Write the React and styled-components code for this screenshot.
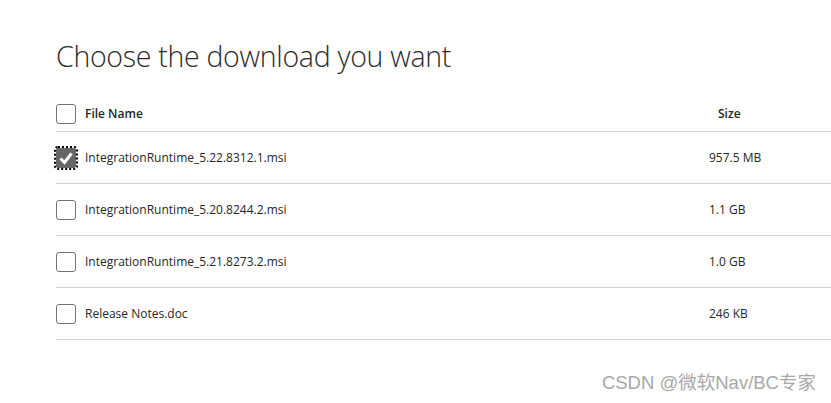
import React, { useState } from "react";
import styled, { createGlobalStyle, css } from "styled-components";

const Global = createGlobalStyle`
  html, body {
    margin: 0;
    padding: 0;
    background: #fff;
    overflow: hidden;
  }
  body {
    font-family: "Open Sans", "Noto Sans", sans-serif;
    color: #262626;
  }
`;

const Page = styled.div`
  width: 831px;
  height: 403px;
  padding: 36px 0 0 56px;
  box-sizing: border-box;
  position: relative;
`;

const Title = styled.h1`
  margin: 0 0 28px;
  font-family: "Open Sans", sans-serif;
  font-weight: 300;
  font-size: 28.5px;
  line-height: 40px;
  color: #2b2b2b;
  letter-spacing: -0.3px;
`;

const Table = styled.div`
  display: flex;
  flex-direction: column;
`;

const Row = styled.div`
  display: grid;
  grid-template-columns: 29px 624px 1fr;
  align-items: center;
  height: 51px;
  border-bottom: 1px solid #d2d2d2;
  font-size: 12px;
  ${(p) =>
    p.header &&
    css`
      height: 27px;
      align-items: start;
      font-weight: 600;
    `}
`;

const Box = styled.div`
  width: 20px;
  height: 20px;
  box-sizing: border-box;
  border: 1px solid #737373;
  border-radius: 3px;
  display: flex;
  align-items: center;
  justify-content: center;
  cursor: pointer;
  ${(p) =>
    p.checked &&
    css`
      background: #666;
      border-color: #666;
      border-radius: 2px;
      outline: 2px dotted #000;
      outline-offset: 0;
    `}
`;

const Name = styled.div`
  line-height: 20px;
`;

const Size = styled.div`
  line-height: 20px;
  padding-left: ${(p) => (p.header ? "9px" : "0")};
`;

const Watermark = styled.div`
  position: absolute;
  right: 15px;
  bottom: 9px;
  font-family: "Liberation Sans", "Noto Sans CJK SC", sans-serif;
  font-size: 18.5px;
  color: #a8a8a8;
  text-shadow: 0 0 1px #fff;
`;

const files = [
  { name: "IntegrationRuntime_5.22.8312.1.msi", size: "957.5 MB", checked: true },
  { name: "IntegrationRuntime_5.20.8244.2.msi", size: "1.1 GB" },
  { name: "IntegrationRuntime_5.21.8273.2.msi", size: "1.0 GB" },
  { name: "Release Notes.doc", size: "246 KB" },
];

function Check({ checked, onClick }) {
  return (
    <Box checked={checked} onClick={onClick}>
      {checked && (
        <svg width="16" height="16" viewBox="0 0 16 16">
          <path d="M2.5 8.5 L6.5 12.5 L13.5 3.5" stroke="#fff" strokeWidth="3" fill="none" />
        </svg>
      )}
    </Box>
  );
}

export default function App() {
  const [sel, setSel] = useState(files.map((f) => !!f.checked));
  const toggle = (i) => setSel(sel.map((v, j) => (j === i ? !v : v)));

  return (
    <Page>
      <Global />
      <Title>Choose the download you want</Title>
      <Table>
        <Row header>
          <Check checked={false} />
          <Name>File Name</Name>
          <Size header>Size</Size>
        </Row>
        {files.map((f, i) => (
          <Row key={f.name}>
            <Check checked={sel[i]} onClick={() => toggle(i)} />
            <Name>{f.name}</Name>
            <Size>{f.size}</Size>
          </Row>
        ))}
      </Table>
      <Watermark>CSDN @微软Nav/BC专家</Watermark>
    </Page>
  );
}
